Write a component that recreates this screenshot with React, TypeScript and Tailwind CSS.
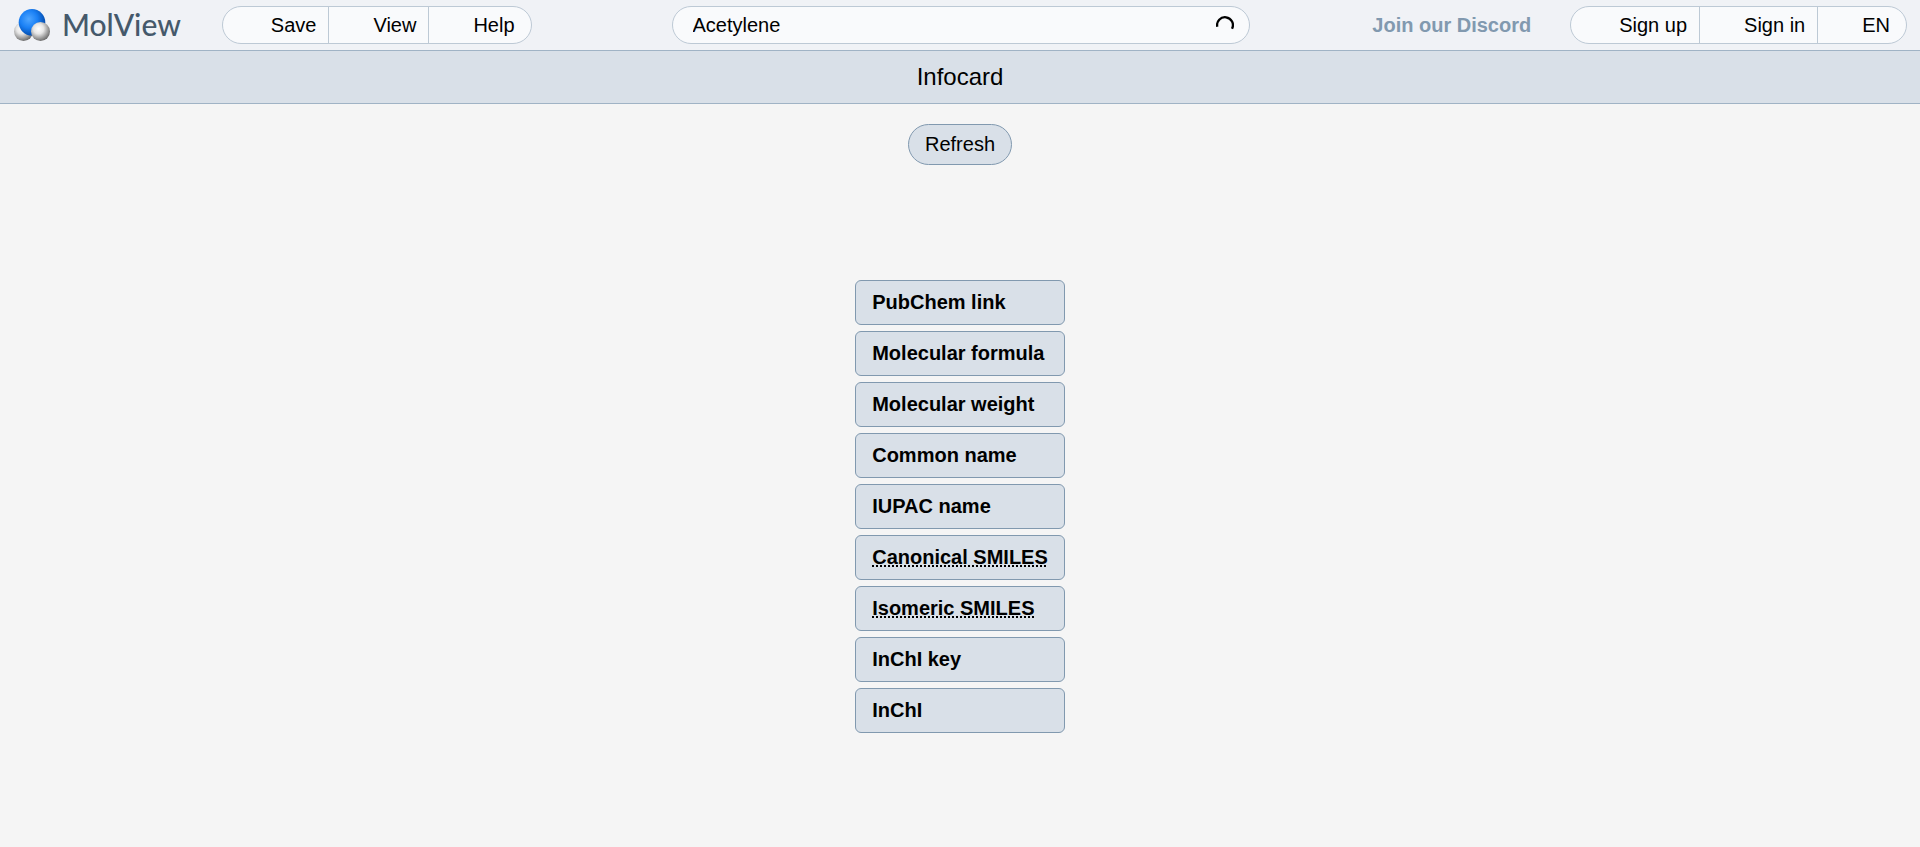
import type { ReactNode } from "react";

type Property = { label: string; title?: string };

const properties: Property[] = [
  { label: "PubChem link" },
  { label: "Molecular formula" },
  { label: "Molecular weight" },
  { label: "Common name" },
  { label: "IUPAC name" },
  { label: "Canonical SMILES", title: "Simplified molecular-input line-entry system" },
  { label: "Isomeric SMILES", title: "Simplified molecular-input line-entry system" },
  { label: "InChI key" },
  { label: "InChI" },
];

function Logo() {
  return (
    <a href="#" className="flex items-center gap-3 text-[#45596b]">
      <svg className="h-8 w-9" viewBox="0 0 36 32" aria-hidden="true">
        <defs>
          <radialGradient id="oxygen" cx="0.38" cy="0.38" r="0.66">
            <stop offset="0" stopColor="#4fa6ff" />
            <stop offset="0.5" stopColor="#1a80f5" />
            <stop offset="1" stopColor="#0047a6" />
          </radialGradient>
          <radialGradient id="hydrogen" cx="0.4" cy="0.36" r="0.66">
            <stop offset="0" stopColor="#ffffff" />
            <stop offset="0.4" stopColor="#e6e6e6" />
            <stop offset="1" stopColor="#6a6a6a" />
          </radialGradient>
        </defs>
        <circle cx="9.5" cy="22.5" r="9.5" fill="url(#hydrogen)" />
        <circle cx="18" cy="13.3" r="13.3" fill="url(#oxygen)" />
        <circle cx="26.5" cy="22.5" r="9.5" fill="url(#hydrogen)" />
      </svg>
      <span className="pb-0.5 font-[Lato,sans-serif] text-[30px] leading-8 font-medium">MolView</span>
    </a>
  );
}

function ButtonGroup({ label, children }: { label: string; children: ReactNode }) {
  return (
    <nav
      aria-label={label}
      className="flex h-[38px] overflow-hidden rounded-full border border-[#bdc9d5] bg-[#f9fafc]"
    >
      {children}
    </nav>
  );
}

function GroupButton({ children }: { children: ReactNode }) {
  return (
    <button
      type="button"
      className="border-r border-[#bdc9d5] pr-3 pl-11 whitespace-nowrap first:pl-12 last:border-r-0 last:pr-4"
    >
      {children}
    </button>
  );
}

export default function App() {
  return (
    <div className="min-h-screen bg-[#f5f5f5] font-['Liberation_Sans',Arial,sans-serif] text-xl leading-6 text-black">
      <header className="grid h-[51px] grid-cols-[1fr_minmax(0,578px)_1fr] items-center border-b border-[#a0b3c5] bg-[#f0f2f6] pr-[13px] pl-[14px]">
        <div className="flex items-center gap-[41px]">
          <Logo />
          <ButtonGroup label="Main menu">
            <GroupButton>Save</GroupButton>
            <GroupButton>View</GroupButton>
            <GroupButton>Help</GroupButton>
          </ButtonGroup>
        </div>
        <form className="flex h-[38px] items-center rounded-full border border-[#bdc9d5] bg-[#f9fafc] pr-[15px] pl-5">
          <input
            type="text"
            aria-label="Search"
            defaultValue="Acetylene"
            className="min-w-0 flex-1 bg-transparent outline-none"
          />
          <svg className="size-[18px]" viewBox="0 0 18 18" fill="none" aria-hidden="true">
            <path d="M1.3 10.8A7.9 7.9 0 1 1 16 12.8" stroke="#000" strokeWidth="2.3" />
          </svg>
        </form>
        <div className="flex items-center justify-end gap-[39px]">
          <a href="#" className="font-bold whitespace-nowrap text-[#8199af]">
            Join our Discord
          </a>
          <ButtonGroup label="Account">
            <GroupButton>Sign up</GroupButton>
            <GroupButton>Sign in</GroupButton>
            <GroupButton>EN</GroupButton>
          </ButtonGroup>
        </div>
      </header>
      <h1 className="border-b border-[#a0b3c5] bg-[#d9e0e8] py-3 text-center text-2xl leading-7">
        Infocard
      </h1>
      <main className="flex flex-col items-center pt-5">
        <button
          type="button"
          className="h-[41px] rounded-full border border-[#8199af] bg-[#d9e0e8] px-4 pb-0.5"
        >
          Refresh
        </button>
        <ul className="mt-[115px] flex flex-col gap-1.5">
          {properties.map(({ label, title }) => (
            <li
              key={label}
              className="flex h-[45px] items-center rounded-md border border-[#8199af] bg-[#d9e0e8] px-4 pb-0.5 font-bold"
            >
              {title ? (
                <abbr
                  title={title}
                  className="underline decoration-dotted decoration-2 underline-offset-2 [text-decoration-skip-ink:none]"
                >
                  {label}
                </abbr>
              ) : (
                <span>{label}</span>
              )}
            </li>
          ))}
        </ul>
      </main>
    </div>
  );
}
